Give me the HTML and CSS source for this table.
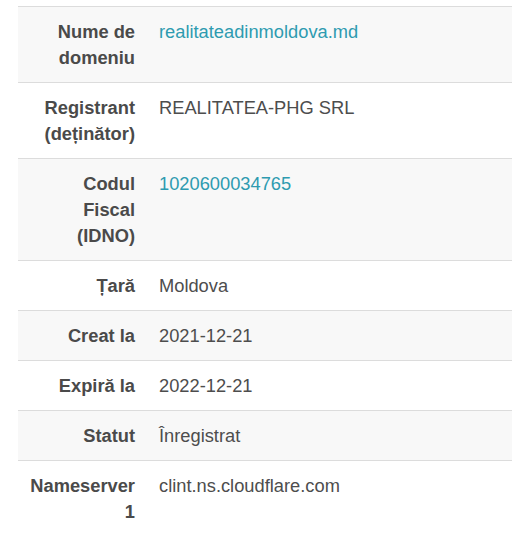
FILE: index.html
```html
<!DOCTYPE html>
<html lang="ro">
<head>
<meta charset="utf-8">
<title>Domeniu</title>
<link rel="stylesheet" href="styles.css">
</head>
<body>
<table class="info">
  <tr class="odd"><th>Nume de domeniu</th><td><a class="link" href="#">realitateadinmoldova.md</a></td></tr>
  <tr><th>Registrant (deținător)</th><td>REALITATEA-PHG SRL</td></tr>
  <tr class="odd"><th>Codul Fiscal (IDNO)</th><td><a class="link" href="#">1020600034765</a></td></tr>
  <tr><th>Țară</th><td>Moldova</td></tr>
  <tr class="odd"><th>Creat la</th><td>2021-12-21</td></tr>
  <tr><th>Expiră la</th><td>2022-12-21</td></tr>
  <tr class="odd"><th>Statut</th><td>Înregistrat</td></tr>
  <tr><th>Nameserver 1</th><td>clint.ns.cloudflare.com</td></tr>
</table>
</body>
</html>
```
FILE: styles.css
```css
html, body {
  margin: 0;
  padding: 0;
  background: #ffffff;
}
body {
  padding: 6px 16px 0 18px;
  font-family: "Liberation Sans", Arial, sans-serif;
  font-size: 18.3px;
  line-height: 26px;
}
.info {
  width: 494px;
  border-collapse: collapse;
  border-top: 1px solid #dcdcdc;
}
.info tr {
  border-bottom: 1px solid #dcdcdc;
}
.info tr.odd {
  background: #f8f8f8;
}
.info th {
  width: 106px;
  padding: 12px 12px 11px 11px;
  text-align: right;
  vertical-align: top;
  font-weight: bold;
  color: #4a4a4a;
}
.info td {
  padding: 12px 12px 11px 12px;
  text-align: left;
  vertical-align: top;
  color: #4d4d4d;
}
.link {
  color: #2e9bb0;
  text-decoration: none;
}
```
